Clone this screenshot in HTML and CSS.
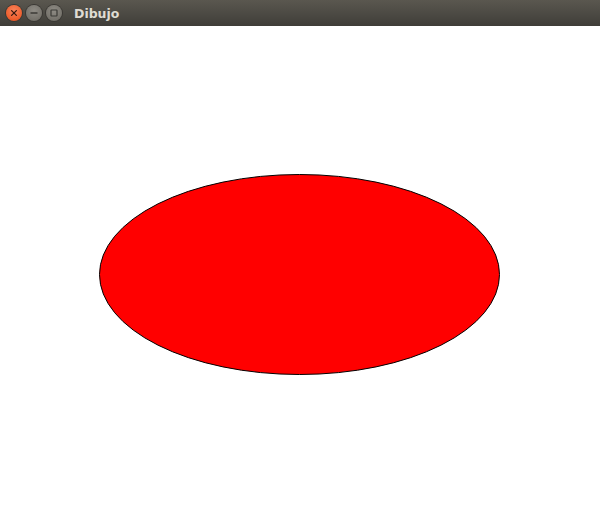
FILE: index.html
```html
<!DOCTYPE html>
<html>
<head>
<meta charset="utf-8">
<link rel="stylesheet" href="styles.css">
</head>
<body>
<div class="window">
  <div class="titlebar">
    <div class="buttons">
      <span class="btn close"><svg width="16" height="16" viewBox="0 0 16 16"><path d="M5.6 5.6 L10.4 10.4 M10.4 5.6 L5.6 10.4" stroke="#3a1a10" stroke-width="1.3" stroke-linecap="round"/></svg></span>
      <span class="btn"><svg width="16" height="16" viewBox="0 0 16 16"><path d="M4.5 8 H11.5" stroke="#3b3a36" stroke-width="1.5"/></svg></span>
      <span class="btn"><svg width="16" height="16" viewBox="0 0 16 16"><rect x="5" y="5" width="6" height="6" rx="0.5" fill="none" stroke="#3b3a36" stroke-width="1.2"/></svg></span>
    </div>
    <span class="title">Dibujo</span>
  </div>
  <div class="canvas">
    <svg width="600" height="500" viewBox="0 0 600 500">
      <ellipse cx="299.5" cy="248.5" rx="200" ry="100" fill="#ff0000" stroke="#000" stroke-width="1"/>
    </svg>
  </div>
</div>
</body>
</html>
```
FILE: styles.css
```css
html, body {
  margin: 0;
  padding: 0;
  background: #ffffff;
}
.window {
  width: 600px;
  height: 526px;
  display: flex;
  flex-direction: column;
  overflow: hidden;
}
.titlebar {
  height: 26px;
  flex: none;
  display: flex;
  align-items: center;
  background: linear-gradient(to bottom, #5a574f 0%, #4a4842 60%, #3f3d38 100%);
  padding-left: 6px;
  box-sizing: border-box;
}
.buttons {
  display: flex;
  gap: 4px;
  align-items: center;
}
.btn {
  width: 16px;
  height: 16px;
  border-radius: 50%;
  background: radial-gradient(circle at 50% 35%, #8e8b84 0%, #75726b 70%, #66635d 100%);
  box-shadow: 0 0 0 1px #3a3834;
  display: block;
}
.btn svg { display: block; }
.btn.close {
  background: radial-gradient(circle at 50% 35%, #f8845c 0%, #ef5f2e 65%, #d9491c 100%);
}
.title {
  margin-left: 12px;
  font-family: "DejaVu Sans", sans-serif;
  font-weight: bold;
  font-size: 12.5px;
  color: #dfdbd2;
  padding-top: 1px;
}
.canvas {
  flex: 1;
  background: #ffffff;
}
.canvas svg { display: block; }
```
